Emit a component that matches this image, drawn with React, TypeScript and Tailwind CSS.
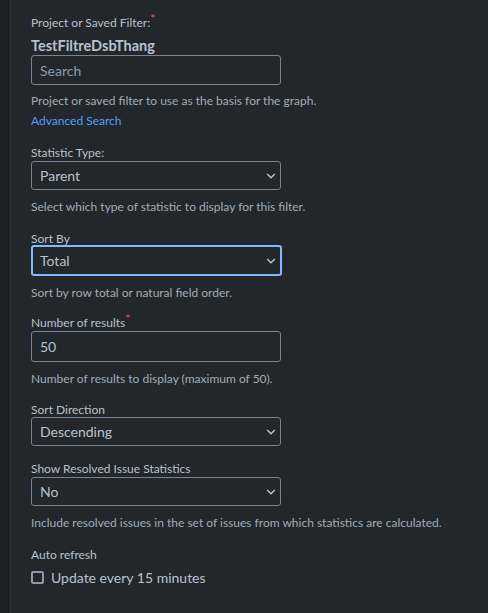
import React from "react";

function Chevron() {
  return (
    <svg width="10" height="10" viewBox="0 0 10 10" className="absolute right-[4px] top-1/2 -translate-y-1/2">
      <path d="M1.2 3 L5 6.8 L8.8 3" fill="none" stroke="#b6c2cf" strokeWidth="1.5" />
    </svg>
  );
}

function Label({ children, required }: { children: React.ReactNode; required?: boolean }) {
  return (
    <div className="text-[12px] leading-[16px] text-[#b6c2cf]">
      {children}
      {required && <span className="relative -top-[4px] text-[#f15b50]">*</span>}
    </div>
  );
}

function Help({ children }: { children: React.ReactNode }) {
  return <p className="mt-[9px] text-[12px] leading-[16px] text-[#9fadbc]">{children}</p>;
}

function Select({ value, focused }: { value: string; focused?: boolean }) {
  return (
    <div
      className={
        focused
          ? "relative flex h-[31px] w-[251px] items-center rounded-[3px] border-2 border-[#85b8ff] bg-[#22272b] pl-[7px] text-[14px] text-[#b6c2cf]"
          : "relative flex h-[29px] w-[250px] items-center rounded-[3px] border border-[#738496] bg-[#22272b] pl-[8px] text-[14px] text-[#b6c2cf]"
      }
    >
      {value}
      <Chevron />
    </div>
  );
}

export default function App() {
  return (
    <div
      className="flex h-[613px] w-[488px] bg-[#22272b]"
      style={{ fontFamily: 'Lato, "Noto Sans", sans-serif' }}
    >
      <div className="w-[11px] shrink-0 border-r border-[#2c3137] bg-[#1d2125]" />
      <div className="flex flex-col pl-[20px] pt-[15px]">
        <Label required>Project or Saved Filter:</Label>
        <div className="mt-[6px] text-[14.5px] font-bold leading-[18px] text-[#b6c2cf]">TestFiltreDsbThang</div>
        <div className="flex h-[30px] w-[250px] items-center rounded-[3px] border border-[#738496] pl-[8px] text-[14px] text-[#8c9bab]">
          Search
        </div>
        <p className="mt-[8px] text-[12px] leading-[16px] text-[#9fadbc]">
          Project or saved filter to use as the basis for the graph.
        </p>
        <a className="mt-[4px] text-[12px] leading-[16px] text-[#579dff]">Advanced Search</a>

        <div className="mt-[16px]">
          <Label>Statistic Type:</Label>
          <Select value="Parent" />
          <Help>Select which type of statistic to display for this filter.</Help>
        </div>

        <div className="mt-[16px]">
          <Label>Sort By</Label>
          <div className="-mt-[2px]">
            <Select value="Total" focused />
          </div>
          <Help>Sort by row total or natural field order.</Help>
        </div>

        <div className="mt-[14px]">
          <Label required>Number of results</Label>
          <div className="flex h-[31px] w-[250px] items-center rounded-[3px] border border-[#738496] pl-[8px] text-[14px] text-[#b6c2cf]">
            50
          </div>
          <Help>Number of results to display (maximum of 50).</Help>
        </div>

        <div className="mt-[15px]">
          <Label>Sort Direction</Label>
          <div className="-mt-[1px]">
            <Select value="Descending" />
          </div>
        </div>

        <div className="mt-[15px]">
          <Label>Show Resolved Issue Statistics</Label>
          <Select value="No" />
          <Help>Include resolved issues in the set of issues from which statistics are calculated.</Help>
        </div>

        <div className="mt-[16px]">
          <Label>Auto refresh</Label>
          <label className="mt-[4px] flex h-[20px] items-center gap-[7px] text-[14px] text-[#b6c2cf]">
            <span className="h-[13px] w-[13px] rounded-[2px] border-2 border-[#8c9bab]" />
            Update every 15 minutes
          </label>
        </div>
      </div>
    </div>
  );
}
